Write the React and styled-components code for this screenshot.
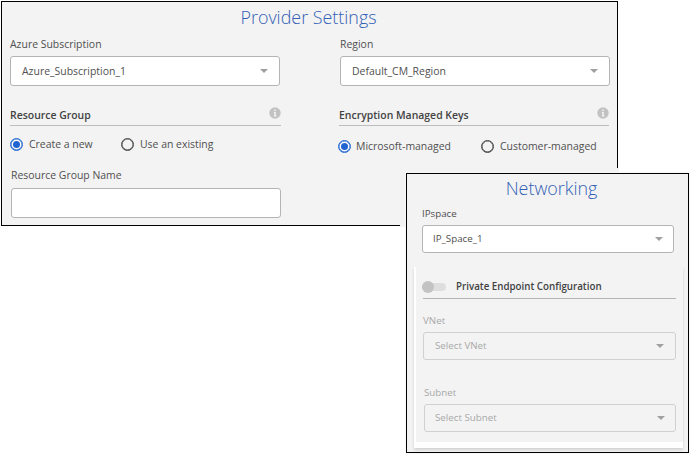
import React from 'react';
import styled, { createGlobalStyle } from 'styled-components';

const GlobalStyle = createGlobalStyle`
  * { box-sizing: border-box; }
  body { margin: 0; background: #fff; font-family: "Open Sans", sans-serif; color: #505050; }
`;

const Page = styled.main`
  position: relative;
  isolation: isolate;
  width: 690px;
  height: 454px;
  padding: 1px;
  overflow: hidden;
`;

const Panel = styled.section`
  border: 1px solid #000;
  background: #f3f3f3;
`;

const ProviderPanel = styled(Panel)`
  position: relative;
  z-index: -2;
  width: 617px;
  height: 225px;
  padding: 3px 8px 0;
  font-size: 10.45px;
`;

const NetworkingPanel = styled(Panel)`
  position: absolute;
  left: 406px;
  top: 173px;
  width: 283px;
  height: 280px;
  padding-top: 2px;
  font-size: 9.75px;
  box-shadow: 0 0 0 1px #f8f8f8;

  &::before {
    content: '';
    position: absolute;
    z-index: -1;
    left: -7px;
    top: -6px;
    width: 219px;
    height: 59px;
    background: #f3f3f3;
  }
`;

const Title = styled.h1`
  margin: 0;
  height: 24px;
  padding-left: ${(p) => p.$indent ?? 0}px;
  padding-right: ${(p) => p.$outdent ?? 0}px;
  font-size: 17.9px;
  line-height: 24px;
  font-weight: 300;
  text-align: center;
  color: #3260b4;
`;

const Columns = styled.div`
  display: grid;
  grid-template-columns: 271px 271px;
  justify-content: space-between;
  width: 600px;
  margin-top: 7px;
`;

const Column = styled.div`
  display: flex;
  flex-direction: column;
`;

const Field = styled.div`
  display: flex;
  flex-direction: column;
  gap: ${(p) => p.$gap ?? 4}px;
  width: ${(p) => p.$width}px;
  margin: ${(p) => p.$margin ?? '0'};
  color: ${(p) => (p.$disabled ? '#a9a9a9' : '#505050')};
`;

const Label = styled.label`
  height: 16px;
  line-height: 16px;
  white-space: nowrap;
`;

const Control = styled.div`
  display: flex;
  align-items: center;
  justify-content: space-between;
  height: ${(p) => p.$height}px;
  padding: 0 ${(p) => p.$inset ?? 11}px;
  border: 1px solid ${(p) => (p.$disabled ? '#d0d0d0' : '#b4b4b4')};
  border-radius: 3px;
  background: ${(p) => (p.$disabled ? '#f3f3f3' : '#fff')};
  line-height: 16px;
  white-space: nowrap;
`;

const Caret = styled.i`
  border: 4px solid transparent;
  border-top-color: #a0a0a0;
  border-bottom: 0;
`;

const SectionHeader = styled.header`
  display: flex;
  align-items: center;
  justify-content: space-between;
  width: ${(p) => p.$width}px;
  height: 22px;
  margin: 18px 0 0;
  border-bottom: 1px solid #bdbdbd;
`;

const SectionTitle = styled.h2`
  margin: 0;
  font-size: inherit;
  line-height: 16px;
  font-weight: 600;
  color: #424242;
  white-space: nowrap;
`;

const InfoSvg = styled.svg`
  width: 12px;
  height: 12px;
  margin-bottom: 4px;
`;

const Radios = styled.div`
  display: flex;
  margin: ${(p) => p.$margin};
`;

const Radio = styled.label`
  display: flex;
  align-items: center;
  gap: ${(p) => p.$gap}px;
  width: ${(p) => p.$width}px;
  height: 16px;
  line-height: 16px;
  white-space: nowrap;
`;

const RadioMark = styled.span`
  display: grid;
  place-items: center;
  flex: none;
  width: 13px;
  height: 13px;
  border: 1px solid ${(p) => (p.$checked ? '#2065cf' : '#454545')};
  border-radius: 50%;
  background: ${(p) => (p.$checked ? '#fff' : 'transparent')};
  box-shadow: inset 0 0 0 0.5px ${(p) => (p.$checked ? '#2065cf' : '#454545')};

  &::after {
    content: '';
    width: 7px;
    height: 7px;
    border-radius: 50%;
    background: ${(p) => (p.$checked ? '#2065cf' : 'transparent')};
  }
`;

const RadioText = styled.span`
  padding-bottom: ${(p) => p.$lift ?? 0}px;
`;

const EndpointCard = styled.div`
  width: 269px;
  height: 181px;
  margin: 14px 0 0 7px;
  padding: 9px 0 0 7px;
  border: solid #fff;
  border-width: 0 0 6px 2px;
  background: #f3f3f3;
  box-shadow: 0 2px 3px rgba(0, 0, 0, 0.14);
`;

const EndpointRow = styled.div`
  display: flex;
  align-items: center;
  gap: 10px;
  width: 253px;
  height: 23px;
  border-bottom: 1px solid #b4b4b4;
`;

const Toggle = styled.span`
  display: flex;
  align-items: center;
  width: 24px;
  height: 8px;
  margin: 0 0 1px -1px;
  border-radius: 4px;
  background: #dedede;

  &::before {
    content: '';
    width: 12px;
    height: 12px;
    border-radius: 50%;
    background: #c3c3c3;
  }
`;

function InfoIcon() {
  return (
    <InfoSvg viewBox="0 0 12 12" aria-label="Info">
      <circle cx="6" cy="6" r="5.7" fill="#c2c2c2" />
      <circle cx="6" cy="3.3" r="0.9" fill="#f3f3f3" />
      <path d="M4.9 5h1.9v3.5h.6v.9H4.8v-.9h.5V5.9h-.4z" fill="#f3f3f3" />
    </InfoSvg>
  );
}

function Select({ label, value, width, height = 30, gap, inset, margin, disabled }) {
  return (
    <Field $width={width} $gap={gap} $margin={margin} $disabled={disabled}>
      <Label>{label}</Label>
      <Control $height={height} $inset={inset} $disabled={disabled}>
        <span>{value}</span>
        <Caret />
      </Control>
    </Field>
  );
}

function RadioOption({ label, checked, width, gap, lift }) {
  return (
    <Radio $width={width} $gap={gap}>
      <RadioMark $checked={checked} />
      <RadioText $lift={lift}>{label}</RadioText>
    </Radio>
  );
}

export default function App() {
  return (
    <>
      <GlobalStyle />
      <Page>
        <ProviderPanel>
          <Title $outdent={2}>Provider Settings</Title>
          <Columns>
            <Column>
              <Select label="Azure Subscription" value="Azure_Subscription_1" width={270} />
              <SectionHeader $width={271}>
                <SectionTitle>Resource Group</SectionTitle>
                <InfoIcon />
              </SectionHeader>
              <Radios $margin="10px 0 0">
                <RadioOption label="Create a new" checked width={111} gap={6} />
                <RadioOption label="Use an existing" gap={6} />
              </Radios>
              <Field $width={270} $gap={5} $margin="15px 0 0 1px">
                <Label>Resource Group Name</Label>
                <Control $height={30} />
              </Field>
            </Column>
            <Column>
              <Select
                label="Region"
                value="Default_CM_Region"
                width={270}
                margin="0 0 0 1px"
              />
              <SectionHeader $width={270}>
                <SectionTitle>Encryption Managed Keys</SectionTitle>
                <InfoIcon />
              </SectionHeader>
              <Radios $margin="12px 0 0 -1px">
                <RadioOption label="Microsoft-managed" checked width={143} gap={5} />
                <RadioOption label="Customer-managed" gap={6} lift={1} />
              </Radios>
            </Column>
          </Columns>
        </ProviderPanel>
        <NetworkingPanel>
          <Title $indent={8}>Networking</Title>
          <Select
            label="IPspace"
            value="IP_Space_1"
            width={252}
            height={28}
            gap={3}
            inset={10}
            margin="6px 0 0 15px"
          />
          <EndpointCard>
            <EndpointRow>
              <Toggle />
              <SectionTitle>Private Endpoint Configuration</SectionTitle>
            </EndpointRow>
            <Select
              label="VNet"
              value="Select VNet"
              width={253}
              height={28}
              gap={3}
              margin="14px 0 0"
              disabled
            />
            <Select
              label="Subnet"
              value="Select Subnet"
              width={252}
              height={28}
              gap={3}
              inset={10}
              margin="25px 0 0 1px"
              disabled
            />
          </EndpointCard>
        </NetworkingPanel>
      </Page>
    </>
  );
}
